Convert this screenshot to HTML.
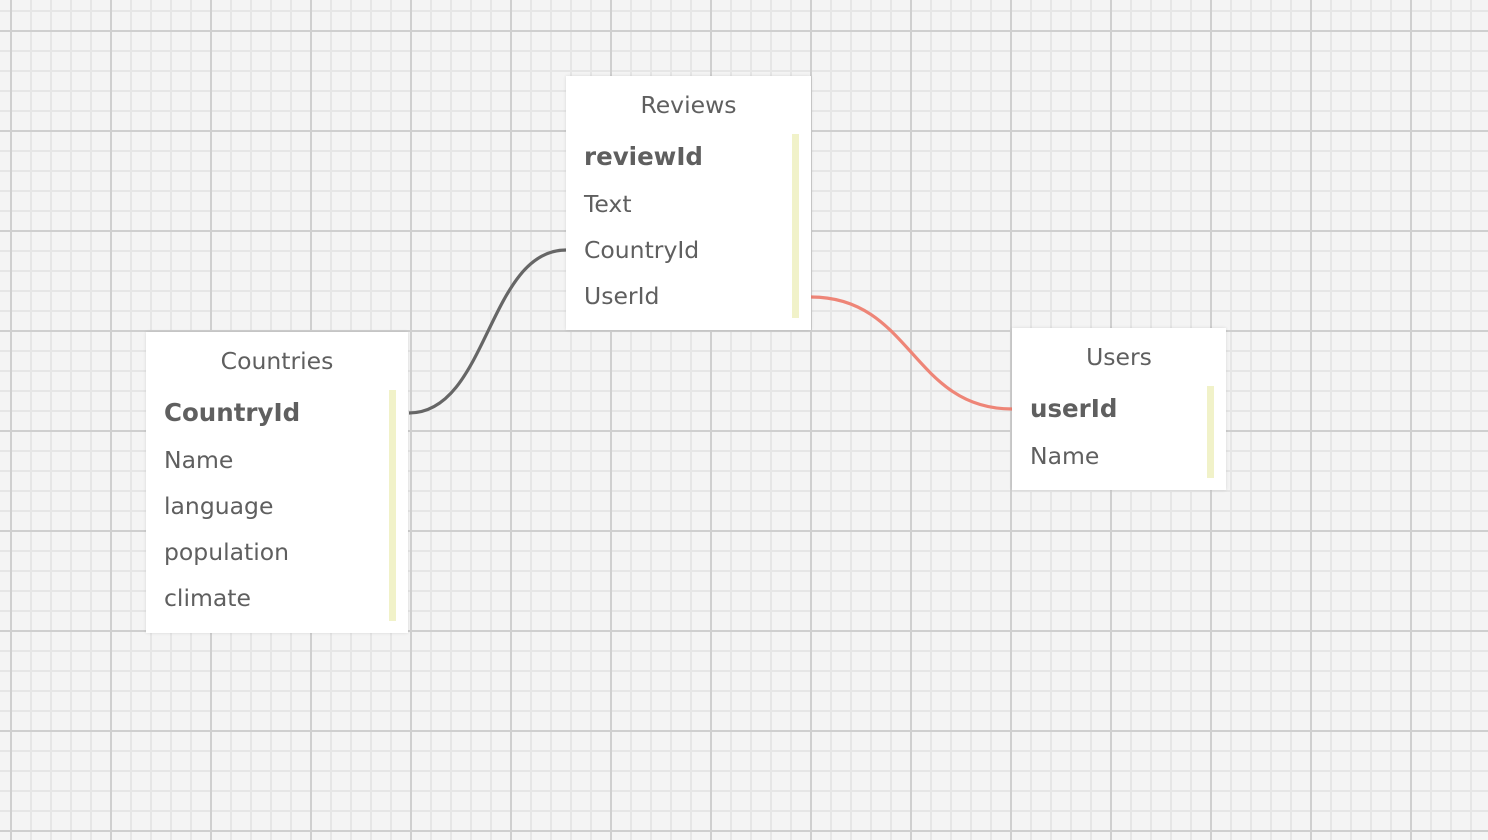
<!DOCTYPE html>
<html><head><meta charset="utf-8"><style>
html,body{margin:0;padding:0;width:1488px;height:840px;overflow:hidden;}
body{background-color:#f4f4f4;
background-image:
linear-gradient(to right,#cfcfcf 0,#cfcfcf 2px,transparent 2px),
linear-gradient(to bottom,#cfcfcf 0,#cfcfcf 2px,transparent 2px),
linear-gradient(to right,#e6e6e6 0,#e6e6e6 2px,transparent 2px),
linear-gradient(to bottom,#e6e6e6 0,#e6e6e6 2px,transparent 2px);
background-size:100px 100px,100px 100px,20px 20px,20px 20px;
background-position:10px 30px,10px 30px,10px 30px,10px 30px;
font-family:"DejaVu Sans","Liberation Sans",sans-serif;color:#5f5f5f;position:relative;}
.t{position:absolute;background:#fff;box-shadow:0 0 3px rgba(0,0,0,0.12);}
.h{position:absolute;left:0;right:0;text-align:center;font-size:23.5px;line-height:30px;}
.r{position:absolute;left:18px;font-size:23.5px;line-height:30px;white-space:nowrap;}
.b{font-weight:bold;font-size:24.5px;}
.bar{position:absolute;width:7px;background:#f1f2c9;}
svg{position:absolute;left:0;top:0;}
</style></head><body>
<svg width="1488" height="840">
<path d="M409 413 C488 413 488 250 566 250" stroke="#666" stroke-width="3.2" fill="none"/>
<path d="M811 297 C912 297 912 409 1012 409" stroke="#ee8577" stroke-width="3.2" fill="none"/>
</svg>
<div class="t" style="left:566px;top:76px;width:245px;height:254px;">
<div class="h" style="top:14px;">Reviews</div>
<div class="r b" style="top:66px;">reviewId</div>
<div class="r" style="top:113px;">Text</div>
<div class="r" style="top:159px;">CountryId</div>
<div class="r" style="top:205px;">UserId</div>
<div class="bar" style="left:226px;top:58px;height:184px;"></div>
</div>
<div class="t" style="left:146px;top:332px;width:262px;height:301px;">
<div class="h" style="top:14px;">Countries</div>
<div class="r b" style="top:66px;">CountryId</div>
<div class="r" style="top:113px;">Name</div>
<div class="r" style="top:159px;">language</div>
<div class="r" style="top:205px;">population</div>
<div class="r" style="top:251px;">climate</div>
<div class="bar" style="left:243px;top:58px;height:231px;"></div>
</div>
<div class="t" style="left:1012px;top:328px;width:214px;height:162px;">
<div class="h" style="top:14px;">Users</div>
<div class="r b" style="top:66px;">userId</div>
<div class="r" style="top:113px;">Name</div>
<div class="bar" style="left:195px;top:58px;height:92px;"></div>
</div>
</body></html>
